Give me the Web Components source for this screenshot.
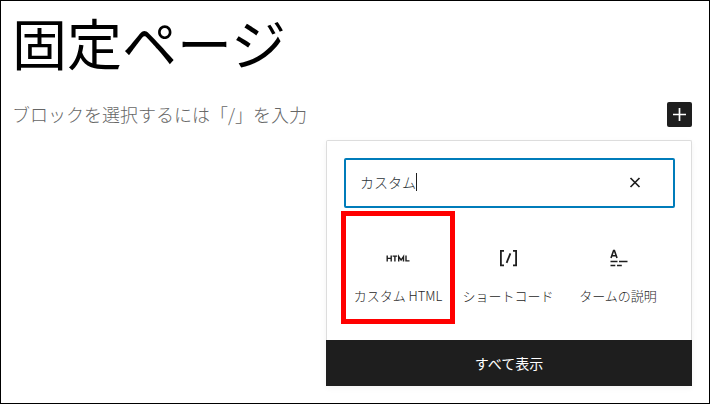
<!DOCTYPE html>
<html lang="ja">
<head>
<meta charset="utf-8">
<meta name="viewport" content="width=device-width, initial-scale=1">
<title>固定ページ</title>
<style>
  * { box-sizing: border-box; }
  body {
    margin: 0;
    background: #fff;
    color: #000;
    font-family: "Noto Sans CJK JP", "Noto Sans", sans-serif;
  }
</style>
</head>
<body>
<page-editor>
  <span slot="title">固定ページ</span>
  <span slot="prompt">ブロックを選択するには「/」を入力</span>
  <block-inserter slot="inserter">
    <search-field slot="search" value="カスタム"></search-field>
    <block-type icon="html" selected>カスタム HTML</block-type>
    <block-type icon="shortcode">ショートコード</block-type>
    <block-type icon="term">タームの説明</block-type>
    <span slot="more">すべて表示</span>
  </block-inserter>
</page-editor>

<script>
class PageEditor extends HTMLElement {
  connectedCallback() {
    const root = this.attachShadow({ mode: "open" });
    root.innerHTML = `
      <style>
        * { box-sizing: border-box; }
        :host {
          display: flex;
          flex-direction: column;
          box-sizing: border-box;
          min-height: 100vh;
          padding: 4px 17px 17px 11px;
          border: 1px solid #000;
        }
        h1 {
          margin: 0;
          font-size: 55px;
          font-weight: 400;
          line-height: 72px;
        }
        .prompt-row {
          display: flex;
          align-items: center;
          justify-content: space-between;
          margin-top: 24px;
        }
        p {
          margin: 0;
          color: #666;
          font-size: 18px;
          font-weight: 300;
          line-height: 26px;
        }
        .add {
          display: flex;
          align-items: center;
          justify-content: center;
          width: 25px;
          height: 25px;
          padding: 0;
          border: none;
          border-radius: 2px;
          background: #1e1e1e;
          color: #fff;
          cursor: pointer;
        }
        .add svg { width: 25px; height: 25px; }
        .popover {
          align-self: flex-end;
          width: 366px;
          max-width: 100%;
          margin-top: 13px;
        }
      </style>
      <h1><slot name="title"></slot></h1>
      <div class="prompt-row">
        <p><slot name="prompt"></slot></p>
        <button class="add" type="button" aria-label="ブロックを追加">
          <svg viewBox="0 0 25 25" fill="none" stroke="currentColor" stroke-width="1.7">
            <path d="M12.5 6v13M6 12.5h13"/>
          </svg>
        </button>
      </div>
      <div class="popover"><slot name="inserter"></slot></div>
    `;

    const popover = root.querySelector(".popover");
    root.querySelector(".add").addEventListener("click", () => {
      popover.hidden = !popover.hidden;
    });
  }
}
customElements.define("page-editor", PageEditor);

class BlockInserter extends HTMLElement {
  connectedCallback() {
    const root = this.attachShadow({ mode: "open" });
    root.innerHTML = `
      <style>
        * { box-sizing: border-box; }
        :host {
          display: block;
          background: #fff;
          border-radius: 2px;
          box-shadow: 0 2px 6px rgba(0,0,0,.05);
        }
        .body {
          padding: 17px 16px 18px 17px;
          border: 1px solid #ddd;
          border-bottom: none;
          border-radius: 2px 2px 0 0;
        }
        .blocks {
          display: grid;
          grid-template-columns: repeat(3, 1fr);
          margin: 5px 2px 0 -1px;
        }
        .more {
          display: block;
          width: 100%;
          height: 46px;
          padding: 0;
          border: none;
          background: #1e1e1e;
          color: #fff;
          font: inherit;
          font-size: 14px;
          line-height: 20px;
          cursor: pointer;
        }
      </style>
      <div class="body">
        <slot name="search"></slot>
        <div class="blocks"><slot></slot></div>
      </div>
      <button class="more" type="button"><slot name="more"></slot></button>
    `;
  }
}
customElements.define("block-inserter", BlockInserter);

class SearchField extends HTMLElement {
  connectedCallback() {
    const root = this.attachShadow({ mode: "open" });
    root.innerHTML = `
      <style>
        * { box-sizing: border-box; }
        :host {
          display: flex;
          align-items: center;
          justify-content: space-between;
          box-sizing: border-box;
          height: 50px;
          padding: 0 26px 2px 14px;
          border: 2px solid #007cba;
          border-radius: 2px;
        }
        label { display: flex; flex: 1; align-items: center; }
        input {
          field-sizing: content;
          padding: 0;
          border: none;
          outline: none;
          background: none;
          color: #2c3338;
          caret-color: transparent;
          font: inherit;
          font-size: 14px;
          font-weight: 300;
          line-height: 20px;
        }
        /* Text cursor, sits right behind the typed text */
        .caret {
          width: 1px;
          height: 18px;
          background: #1e1e1e;
        }
        button {
          display: flex;
          width: 24px;
          height: 24px;
          padding: 0;
          border: none;
          background: none;
          color: #1e1e1e;
          cursor: pointer;
        }
        svg { width: 24px; height: 24px; }
      </style>
      <label>
        <input type="text" aria-label="検索">
        <span class="caret"></span>
      </label>
      <button type="button" aria-label="検索をリセット">
        <svg viewBox="0 0 24 24" fill="none" stroke="currentColor" stroke-width="1.7">
          <path d="M7.5 8l9 9M16.5 8l-9 9"/>
        </svg>
      </button>
    `;

    const input = root.querySelector("input");
    input.value = this.getAttribute("value") || "";
    root.querySelector("button").addEventListener("click", () => {
      input.value = "";
      input.focus();
    });
  }
}
customElements.define("search-field", SearchField);

const blockIcons = {
  html: `<g stroke-width="1.4">
      <path d="M1.2 9.5v6M5.2 9.5v6M1.2 12.4h4M6.6 10.1h4.6M8.9 10.1v5.4"/>
      <path d="M12.7 15.5v-5l2.4 3.6 2.4-3.6v5M20 9.5v5.4h3.5"/>
    </g>`,
  shortcode: `<path stroke-width="1.8" d="M8 4.9H4.9v14.4H8M17 4.9h3.1v14.4H17"/>
    <path stroke-width="1.8" d="M14.4 7.4l-3.8 9.4"/>`,
  term: `<path stroke-width="1.6" d="M5 12l2.6-7.5h.8L11 12M6 9.7h4"/>
    <path stroke-width="1.6" d="M4.5 15.5h7M13 15.5h8.5M4.5 19.5h4.8M11 19.5h4.8"/>`
};

class BlockType extends HTMLElement {
  connectedCallback() {
    const root = this.attachShadow({ mode: "open" });
    root.innerHTML = `
      <style>
        * { box-sizing: border-box; }
        :host { display: block; }
        button {
          display: flex;
          flex-direction: column;
          align-items: center;
          gap: 16px;
          width: 100%;
          height: 109px;
          padding: 33px 0 0;
          border: none;
          background: none;
          color: #1e1e1e;
          font: inherit;
          font-size: 13px;
          font-weight: 300;
          line-height: 20px;
          white-space: nowrap;
          cursor: pointer;
        }
        svg { display: block; width: 24px; height: 24px; }
        /* Red marker is drawn around the cell, without taking room in the grid */
        :host([selected]) {
          outline: 5px solid #f00;
          outline-offset: -3px;
        }
      </style>
      <button type="button">
        <svg viewBox="0 0 24 24" fill="none" stroke="currentColor">${blockIcons[this.getAttribute("icon")]}</svg>
        <span><slot></slot></span>
      </button>
    `;
  }
}
customElements.define("block-type", BlockType);
</script>
</body>
</html>
